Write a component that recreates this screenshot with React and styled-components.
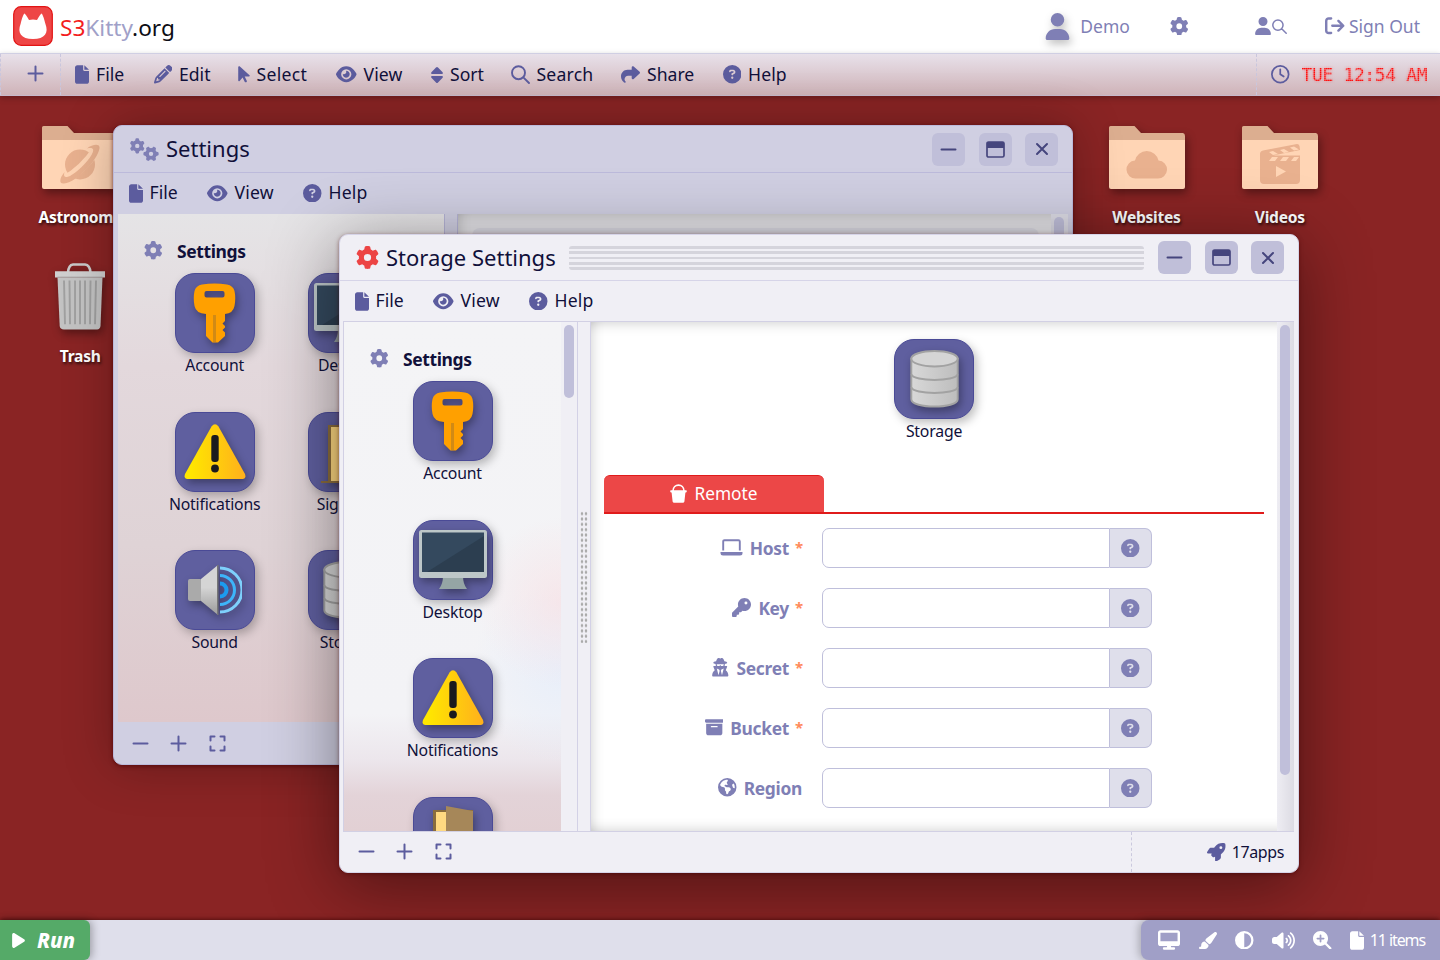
import React from "react";
import styled, { createGlobalStyle, css } from "styled-components";
import {
  FaFile, FaPencil, FaArrowPointer, FaEye, FaShare, FaCircleQuestion, FaGear, FaGears,
  FaUser, FaArrowRightFromBracket, FaRegClock, FaKey, FaUserSecret,
  FaBoxArchive, FaEarthAmericas, FaRocket, FaDesktop, FaPaintbrush,
  FaCircleHalfStroke, FaVolumeHigh, FaMagnifyingGlassPlus, FaPlay,
} from "react-icons/fa6";

const ink = "#10103a";
const indigo = "#5c5c9e";
const soft = "#7f7fb5";

const Global = createGlobalStyle`
  * { box-sizing: border-box; }
  body { margin: 0; overflow: hidden; font-family: "Noto Sans", "Open Sans", sans-serif; color: ${ink}; }
  svg { display: block; flex: none; }
`;

const Screen = styled.div`
  width: 1440px;
  height: 960px;
  display: flex;
  flex-direction: column;
  background: #8a2424;
  overflow: hidden;
`;

/* Top header */
const Header = styled.header`
  height: 53px;
  flex: none;
  background: #fff;
  display: flex;
  align-items: center;
  justify-content: space-between;
  padding: 0 20px 1px 13px;
`;
const Brand = styled.div`
  display: flex;
  align-items: center;
  gap: 7px;
  font-size: 22.6px;
  color: #0c0c14;
  white-space: nowrap;
`;
const BrandName = styled.span`padding-top: 2px;`;
const Red = styled.span`color: #f31d1d;`;
const Lilac = styled.span`color: #a0a0c8;`;
const Account = styled.nav`
  display: flex;
  align-items: center;
  color: ${soft};
  font-size: 17.5px;
`;
const AccountItem = styled.div`
  display: flex;
  align-items: center;
  gap: ${(p) => p.$gap || 0}px;
  margin-left: ${(p) => p.$before || 0}px;
  white-space: nowrap;
`;
const Avatar = styled.span`filter: drop-shadow(2px 4px 4px rgba(0, 0, 0, 0.25));`;

/* Menus */
const MenuBar = styled.div`
  height: 43px;
  flex: none;
  display: flex;
  border-top: 1px solid #d0cfe3;
  border-bottom: 1px solid #c7b9cb;
  background: linear-gradient(#e8e1ea, #cfb3b8);
  box-shadow: 0 2px 6px rgba(0, 0, 0, 0.25);
  position: relative;
`;
const PlusCell = styled.div`
  width: 61px;
  padding: 0 0 2px 9px;
  display: grid;
  place-items: center;
  border: dashed #c9c6dd;
  border-width: 0 1px;
  color: ${indigo};
`;
const ClockCell = styled.div`
  margin-left: auto;
  width: 184px;
  display: flex;
  align-items: center;
  padding-left: 14px;
  border-left: 1px dashed #c9c6dd;
  color: ${indigo};
`;
const Led = styled.span`
  margin-left: 12px;
  font-family: "DejaVu Sans Mono", monospace;
  font-size: 18px;
  letter-spacing: -0.36px;
  color: #ff1010;
  text-shadow: 0 0 3px rgba(255, 60, 60, 0.7);
  white-space: nowrap;
  mask-image: repeating-linear-gradient(90deg, #000 0 1px, rgba(0, 0, 0, 0.75) 1px 2px),
    repeating-linear-gradient(#000 0 1px, rgba(0, 0, 0, 0.7) 1px 2px);
  mask-composite: intersect;
`;
const MenuItem = styled.div`
  display: flex;
  align-items: center;
  gap: 7px;
  margin-right: 27.5px;
  color: ${indigo};
`;
const MenuText = styled.span`
  width: ${(p) => p.$w}px;
  padding-bottom: 2px;
  color: ${ink};
  font-size: 17.6px;
  letter-spacing: ${(p) => p.$track || 0}px;
  white-space: nowrap;
`;
const MainMenu = styled.div`
  display: flex;
  padding-left: 14px;
`;

/* Desktop */
const Desktop = styled.main`
  flex: 1;
  position: relative;
  display: grid;
  grid-template-columns: repeat(10, 133.3px);
  grid-auto-rows: 139px;
  align-content: start;
  padding: 26px 0 0 13.5px;
`;
const Shortcut = styled.div`
  grid-column: ${(p) => p.$col};
  grid-row: ${(p) => p.$row};
  display: flex;
  flex-direction: column;
  align-items: center;
  color: #fff;
  font-size: 15.6px;
  font-weight: 700;
  letter-spacing: -0.25px;
  text-shadow: 1px 2px 3px rgba(0, 0, 0, 0.7);
  white-space: nowrap;
`;
const Picture = styled.div`
  height: 84px;
  padding-top: ${(p) => p.$top || 0}px;
  filter: drop-shadow(2px 4px 5px rgba(0, 0, 0, 0.4));
`;

/* Windows */
const Window = styled.section`
  position: absolute;
  left: ${(p) => p.$x}px;
  top: ${(p) => p.$y}px;
  width: 960px;
  height: ${(p) => p.$h}px;
  display: flex;
  flex-direction: column;
  border: 1px solid ${(p) => (p.$dim ? "#bcbadb" : "#d6d4e8")};
  border-radius: 9px;
  background: ${(p) => (p.$dim ? "#d0cfe2" : "#f0eff5")};
  box-shadow: ${(p) => (p.$dim ? "0 0 50px rgba(0,0,0,.28), 0 1px 4px rgba(80,0,0,.7)" : "0 12px 70px rgba(0,0,0,.45), 0 1px 4px rgba(80,0,0,.5)")};
  overflow: hidden;
`;
const TitleBar = styled.div`
  height: ${(p) => (p.$dim ? 47 : 46)}px;
  flex: none;
  display: flex;
  align-items: center;
  padding: 0 14px 0 16px;
  border-bottom: 1px solid ${(p) => (p.$dim ? "#bcbadb" : "#d6d4e8")};
`;
const Title = styled.h1`
  margin: 0 0 0 7px;
  padding-bottom: 2px;
  width: ${(p) => p.$w}px;
  font-size: 22px;
  font-weight: 400;
  white-space: nowrap;
`;
const Grip = styled.div`
  flex: 1;
  height: 24px;
  margin: 0 14px;
  border-radius: 3px;
  background: ${(p) => (p.$dim ? "none" : "repeating-linear-gradient(#d5d4dc 0 2.7px, transparent 2.7px 5.34px)")};
`;
const WinButtons = styled.div`
  display: flex;
  gap: 13.5px;
`;
const WinButton = styled.button`
  width: 33px;
  height: 33px;
  padding: 0;
  border: 0;
  border-radius: 6px;
  display: grid;
  place-items: center;
  color: #45457d;
  background: #c0bfd9;
`;
const WinMenu = styled.div`
  height: 40px;
  flex: none;
  display: flex;
  padding-left: 14.5px;
`;
const Body = styled.div`
  flex: 1;
  min-height: 0;
  display: flex;
  margin: 0 4px 0 3px;
  border: 1px solid ${(p) => (p.$dim ? "transparent" : "#d2d0e4")};
  border-right-width: 0;
`;
const Sidebar = styled.aside`
  width: ${(p) => p.$w}px;
  flex: none;
  padding-top: 21px;
  overflow: hidden;
  ${(p) =>
    p.$dim
      ? css`background: linear-gradient(#e5e4e6, #e3d8dc 30%, #dfd3d6 65%, #dec8cc);`
      : css`background:
          radial-gradient(circle at 100% 55%, rgba(248, 222, 226, 0.6), transparent 24%),
          radial-gradient(circle at 100% 69%, rgba(226, 236, 252, 0.6), transparent 22%),
          linear-gradient(#f4f4f6, #f3f3f6 77%, #ece6ec 86%, #e3d3d8 93%, #e2d0d4);`}
`;
const Track = styled.div`
  width: ${(p) => p.$w}px;
  flex: none;
  padding: 3px 3px 0;
  background: ${(p) => p.$bg};
`;
const Thumb = styled.div`
  width: 10px;
  height: ${(p) => p.$h}px;
  border-radius: 5px;
  background: #c0bfda;
`;
const Splitter = styled.div`
  width: 14px;
  flex: none;
  display: grid;
  place-items: center;
  border: solid ${(p) => (p.$dim ? "#b6b4d6" : "#d3d1e6")};
  border-width: 0 1px;
`;
const Dots = styled.div`
  width: 8px;
  height: 132px;
  background: radial-gradient(circle, #aaa 1.3px, transparent 1.6px);
  background-size: 4px 5.33px;
`;
const Content = styled.div`
  flex: 1;
  min-width: 0;
  overflow: hidden;
  background: ${(p) => (p.$dim ? "#e6e5e9" : "#fff")};
  box-shadow: inset 14px 0 14px -14px rgba(0, 0, 0, 0.2), inset 0 14px 14px -14px rgba(0, 0, 0, 0.22),
    inset 0 -14px 14px -14px rgba(0, 0, 0, 0.2);
`;
const Placeholder = styled.div`
  height: 60px;
  margin: 14px 12px 0 14px;
  border-radius: 8px;
  background: #dad9e2;
`;
const SideHeading = styled.h2`
  height: 31px;
  margin: 0;
  padding-left: 26px;
  display: flex;
  gap: 14.5px;
  align-items: center;
  font-size: 17.5px;
  letter-spacing: -0.4px;
  color: ${ink};
`;
const AppGrid = styled.div`
  display: grid;
  grid-template-columns: repeat(${(p) => p.$cols}, ${(p) => (p.$cols > 1 ? "133.3px" : "1fr")});
  grid-auto-rows: 138.7px;
  padding-top: 7px;
  padding-left: ${(p) => (p.$cols > 1 ? 30 : 0)}px;
`;
const AppCell = styled.div`
  display: flex;
  flex-direction: column;
  align-items: center;
  font-size: 15.8px;
  letter-spacing: -0.2px;
  line-height: 25px;
  white-space: nowrap;
`;
const Tile = styled.div`
  width: 80px;
  height: 80px;
  display: grid;
  place-items: center;
  border-radius: 20px;
  border: 1px solid #4a4a96;
  background: #5f5f9f;
  box-shadow: 3px 4px 10px rgba(0, 0, 0, 0.25);
  svg { filter: drop-shadow(2px 4px 4px rgba(0, 0, 0, 0.35)); }
`;
const Footer = styled.footer`
  height: ${(p) => (p.$dim ? 41 : 40)}px;
  flex: none;
  display: flex;
  align-items: center;
  padding-left: 17.5px;
  color: ${indigo};
`;
const FootIcons = styled.div`
  display: flex;
  align-items: center;
  gap: 21.700px;
  padding-bottom: 1px;
`;
const Status = styled.div`
  width: 167px;
  height: 100%;
  margin-left: auto;
  padding-right: 14px;
  display: flex;
  align-items: center;
  justify-content: flex-end;
  gap: 6px;
  border-left: 1px dashed #cbc9de;
  font-size: 16px;
  letter-spacing: -0.4px;
`;
const StatusText = styled.span`color: ${ink};`;

/* Form */
const Hero = styled.div`
  padding-top: 17px;
  height: 153px;
`;
const Tabs = styled.div`
  margin: 0 13px;
  display: flex;
  border-bottom: 2px solid #e01b1b;
`;
const Tab = styled.div`
  width: 220px;
  height: 37px;
  padding-bottom: 1px;
  display: flex;
  align-items: center;
  justify-content: center;
  gap: 7px;
  border-radius: 6px 6px 0 0;
  border-top: 1px solid #e01b1b;
  background: #ec4747;
  color: #fff;
  font-size: 17.3px;
`;
const Form = styled.form`
  padding-top: 14px;
  display: grid;
  gap: 20px;
`;
const Field = styled.div`
  height: 40px;
  display: flex;
`;
const Label = styled.label`
  width: 211px;
  padding-bottom: 1px;
  display: flex;
  align-items: center;
  justify-content: flex-end;
  gap: 7px;
  color: ${soft};
  font-size: 17.4px;
  font-weight: 700;
  letter-spacing: -0.3px;
`;
const Star = styled.span`
  width: 7px;
  padding-bottom: 1px;
  margin-left: -1px;
  color: #ff8a5c;
  font-size: 15px;
`;
const Input = styled.input`
  width: 288px;
  margin-left: 20px;
  border: 1px solid #bfbfdb;
  border-radius: 7px 0 0 7px;
  background: #fff;
`;
const Hint = styled.div`
  width: 42px;
  display: grid;
  place-items: center;
  border: 1px solid #bfbfdb;
  border-left: 0;
  border-radius: 0 7px 7px 0;
  background: #dfdfeb;
  color: ${soft};
`;

/* Taskbar */
const Taskbar = styled.div`
  height: 40px;
  flex: none;
  display: flex;
  justify-content: space-between;
  position: relative;
  background: #dfdfeb;
  box-shadow: 0 -1px 4px rgba(50, 0, 0, 0.6);
`;
const Run = styled.div`
  width: 90px;
  padding-left: 10px;
  display: flex;
  align-items: center;
  gap: 10px;
  border-radius: 0 6px 6px 0;
  background: #55aa68;
  box-shadow: 2px 0 8px rgba(0, 0, 0, 0.3);
  color: #fff;
  font-size: 20.5px;
  font-weight: 800;
  font-style: italic;
`;
const Tray = styled.div`
  width: 299px;
  padding: 0 15px 0 17px;
  display: flex;
  align-items: center;
  justify-content: space-between;
  border-radius: 8px 0 0 8px;
  background: #a09fc7;
  box-shadow: -2px 0 8px rgba(0, 0, 0, 0.25);
  color: #fff;
`;
const Items = styled.div`
  display: flex;
  align-items: center;
  gap: 6px;
  font-size: 16px;
  letter-spacing: -1.1px;
  white-space: nowrap;
`;

/* Drawn icons */
const FileIcon = styled(FaFile).attrs({ size: 19 })`width: 14px;`;
const PointerIcon = styled(FaArrowPointer).attrs({ size: 18.5 })`width: 12px;`;
const Stroke = ({ w, h = w, box, d, sw = 2 }) => (
  <svg width={w} height={h} viewBox={box} fill="none" stroke="currentColor" strokeWidth={sw} strokeLinecap="round" strokeLinejoin="round"><path d={d} /></svg>
);
const Plus = () => <Stroke w={17} box="0 0 17 17" d="M8.5 1.5v14M1.5 8.5h14" />;
const Minus = () => <Stroke w={17} box="0 0 17 17" d="M1.5 8.5h14" />;
const Expand = () => <Stroke w={17} box="0 0 17 17" d="M1.5 5.5v-4h4M11.5 1.5h4v4M15.5 11.5v4h-4M5.5 15.5h-4v-4" />;
const Cross = () => <Stroke w={14} box="0 0 14 14" d="M2 2l10 10M12 2L2 12" />;
const SearchIcon = ({ size = 19 }) => <Stroke w={size} box="0 0 19 19" d="M14 7.7a6.500 6.500 0 1 1-13 0a6.500 6.500 0 1 1 13 0M12.300 12.300l5.700 5.700" sw={1.9} />;
const SortIcon = () => (
  <svg width="12" height="18" viewBox="0 0 12 18" fill="currentColor">
    <path d="M5 1.4Q6 .4 7 1.4l4.6 4.8Q12.400 7.900 11 8H1Q-.4 7.900.4 6.200zM5 16.600Q6 17.600 7 16.600l4.600-4.800Q12.400 10.100 11 10H1Q-.4 10.100.4 11.800z" />
  </svg>
);
const Restore = () => (
  <svg width="19" height="17" viewBox="0 0 19 17"><rect x="1" y="1" width="17" height="15" rx="1.600" fill="none" stroke="currentColor" strokeWidth="1.700" /><path d="M1 1h17v6H1z" fill="currentColor" /></svg>
);
const LaptopIcon = () => (
  <svg width="23" height="17" viewBox="0 0 23 17"><path d="M3.200 11.500V2.500Q3.200 1.200 4.500 1.200h14Q19.800 1.200 19.800 2.500v9" fill="none" stroke="currentColor" strokeWidth="1.900" /><path d="M.5 13h22v1q0 2.500-2.500 2.500H3Q.5 16.500.5 14z" fill="currentColor" /></svg>
);
const BucketIcon = () => (
  <svg width="17" height="19" viewBox="0 0 17 19" fill="currentColor"><path d="M3 7C3-.9 14-.9 14 7" fill="none" stroke="currentColor" strokeWidth="1.600" /><path d="M1 6.300h15q1 0 .8 1.200-.2.900-1 .900h-.4l-1 9q-.2 1.400-1.600 1.400H4.200q-1.400 0-1.600-1.400l-1-9h-.4q-.8 0-1-.9Q0 6.300 1 6.300z" /></svg>
);
const Cat = () => (
  <svg width="40" height="40" viewBox="0 0 40 40"><rect x=".7" y=".7" width="38.600" height="38.600" rx="7.500" fill="#ee4646" stroke="#e21414" strokeWidth="1.200" /><path d="M11.300 7.500Q12.500 7.800 16 14Q20 12.900 24 14Q27.500 7.800 28.700 7.500C30 9 31.500 14 32.300 17.500C36 27 32 33 20 33S4 27 7.700 17.500C8.500 14 10 9 11.300 7.500z" fill="#fff" /></svg>
);
const Folder = ({ children }) => (
  <svg width="76" height="63" viewBox="0 0 76 63">
    <path d="M1.500 0H25.500L32 7H74Q76 7.500 76 10V16H0V1.500Q0 0 1.500 0z" fill="#dcae90" />
    <path d="M0 14H76V61Q76 63 74 63H2Q0 63 0 61z" fill="#ffd5b5" />
    {children}
  </svg>
);
const tone = "#e9b18f";
const Planet = () => (
  <Folder>
    <circle cx="38" cy="38.500" r="15" fill={tone} />
    <path d="M22 54Q40 45 55 23" fill="none" stroke="#ffd5b5" strokeWidth="9" />
    <path d="M22.500 46C17 53 17 58 22 57.500C29 57 38 50 46 41.500C53 34 58 25 57.500 21C57 17.500 50 18.500 45 22.500C51 21 53 23 49.500 29C45 37 35 46 28 50C23 52.500 21 50.500 22.500 46z" fill={tone} />
  </Folder>
);
const CloudFolder = () => (
  <Folder><path d="M27 52.500a9 9 0 0 1-1-18 12 12 0 0 1 23.500 0 9 9 0 0 1-1 18z" fill={tone} /></Folder>
);
const Clapper = () => (
  <Folder>
    <path d="M18 28Q18 25 21 24.500L55 18Q57 18 57.500 20L58 24L31 29.500H58V54Q58 58 54 58H22Q18 58 18 54z" fill={tone} />
    <path d="M27 26l4-1 5 3-5 1zM38 24l4-1 5 3-5 1zM48 21.500l4-1 5 3-5 1zM30 31h6l-3 4h-6zM41 31h6l-3 4h-6zM52 31h5l-3 4h-5zM34 40v11l10-5.500z" fill="#ffd5b5" />
  </Folder>
);
const TrashIcon = () => (
  <svg width="50" height="67" viewBox="0 0 50 69" preserveAspectRatio="none">
    <path d="M13 10Q13.500 2 18 1.500H30Q35 2 35.500 10" fill="none" stroke="#c9c9c9" strokeWidth="2.600" />
    <path d="M0 8.500H50V15H0z" fill="#cfcfcf" />
    <path d="M2.500 15H47.500L45.500 65Q45 68.500 42 68.500H9Q5 68.500 4.700 65z" fill="#c3c3c3" />
    <path d="M2.500 14.500H47.500" stroke="#aaa" />
    <path d="M9 18l1 45M14.500 18l.5 45M20 18v45M25 18v45M30 18v45M35.500 18l-.5 45M41 18l-1 45" stroke="#a0a0a0" strokeWidth="1.900" />
  </svg>
);
const art = {
  Account: () => (
    <svg width="43" height="60" viewBox="0 0 43 60"><path fillRule="evenodd" d="M9 1.500Q21.500-.5 34 1.500Q40 2.500 41.500 8Q43 15 41.500 23Q40 30.500 32 31V38L29.500 40.500L32 43V44.500L29.500 47L32 49.500V53L25 59.500H19.500L13 53V31Q3 30.500 1.500 23Q0 15 1.500 8Q3 2.500 9 1.500zM13.500 8Q11.500 8 11.500 10V12.500Q11.500 14.500 13.500 14.500H29.500Q31.500 14.500 31.500 12.500V10Q31.500 8 29.500 8z" fill="#ffa000" /><path d="M20 32h3v27h-3z" fill="#d18a15" /></svg>
  ),
  Desktop: () => (
    <svg width="68" height="60" viewBox="0 0 68 60"><path d="M24 46H44Q44 54 48 59H20Q24 54 24 46z" fill="#95a5a5" /><rect x="0" y="0" width="68" height="48" rx="2.500" fill="#bdc7c8" /><path d="M3 2.500H65V42H3z" fill="#34495e" /><path d="M65 6V42H8z" fill="#2c3e50" /></svg>
  ),
  Notifications: () => (
    <svg width="62" height="56" viewBox="0 0 62 56"><defs><linearGradient id="warn" x1="0" y1="1" x2="1" y2="1"><stop offset=".1" stopColor="#ffe600" /><stop offset="1" stopColor="#ffb01c" /></linearGradient></defs><path d="M27.500 2.500Q31-2 34.500 2.500L61 50Q62.500 54.500 58.500 55H3.500Q-.5 54.500 1 50z" fill="url(#warn)" /><rect x="27.300" y="11" width="7.400" height="27" rx="3" fill="#1a1a1e" /><circle cx="31" cy="44.500" r="3.900" fill="#1a1a1e" /></svg>
  ),
  "Sign Out": () => (
    <svg width="54" height="62" viewBox="0 0 54 62"><path d="M7 4h40v58H7z" fill="#8a6c3c" /><path d="M10 6h36v54H10z" fill="#ffd981" /><path d="M20 0L47 5V61L20 62z" fill="#a68759" /><path d="M0 60h54v2H0z" fill="#8a6c3c" /></svg>
  ),
  Sound: () => (
    <svg width="54" height="50" viewBox="0 0 54 50"><defs><linearGradient id="cone" x1="0" y1="0" x2="0" y2="1"><stop offset=".45" stopColor="#d5d5d5" /><stop offset=".9" stopColor="#a5a5a5" /></linearGradient></defs><rect y="14" width="14" height="22" rx="2" fill="#aaa" /><path d="M13 14L30 0V50L13 36z" fill="url(#cone)" /><path d="M29 0h1.500v50H29z" fill="#777" /><g fill="none" strokeWidth="3"><path d="M32 18.500a6.500 6.500 0 0 1 0 13" stroke="#1b9cf0" strokeWidth="4" /><path d="M32 10.500a14.500 14.500 0 0 1 0 29" stroke="#3db5fa" /><path d="M32 3a22 22 0 0 1 0 44" stroke="#7ed0fc" /></g></svg>
  ),
  Storage: () => (
    <svg width="49" height="58" viewBox="0 0 50 60"><defs><linearGradient id="drum"><stop stopColor="#d8d8d8" /><stop offset="1" stopColor="#bdbdbd" /></linearGradient></defs><path d="M1 9V51C1 61 49 61 49 51V9z" fill="url(#drum)" stroke="#a2a2a2" strokeWidth="2" /><ellipse cx="25" cy="9" rx="24" ry="8" fill="#d5d5d5" stroke="#a2a2a2" strokeWidth="2" /><path d="M1 25C3 33 47 33 49 25M1 38.500C3 46.500 47 46.500 49 38.500" fill="none" stroke="#a2a2a2" strokeWidth="2" /></svg>
  ),
};

const AppIcon = ({ name, bare }) => {
  const Art = art[name];
  return <AppCell><Tile><Art /></Tile>{bare ? null : name}</AppCell>;
};
const Entry = ({ icon, text, w, track }) => (
  <MenuItem>{icon}<MenuText $w={w} $track={track}>{text}</MenuText></MenuItem>
);
const WindowMenu = () => (
  <WinMenu>
    <Entry icon={<FileIcon />} text="File" w={30} />
    <Entry icon={<FaEye size={20.500} />} text="View" w={41} track={0.2} />
    <Entry icon={<FaCircleQuestion size={18.500} />} text="Help" w={40} track={0.2} />
  </WinMenu>
);
const WindowTitle = ({ icon, text, w, dim }) => (
  <TitleBar $dim={dim}>
    {icon}
    <Title $w={w}>{text}</Title>
    <Grip $dim={dim} />
    <WinButtons>
      <WinButton><Minus /></WinButton>
      <WinButton><Restore /></WinButton>
      <WinButton><Cross /></WinButton>
    </WinButtons>
  </TitleBar>
);
const fields = [
  { icon: <LaptopIcon />, text: "Host", required: true },
  { icon: <FaKey size={19} />, text: "Key", required: true },
  { icon: <FaUserSecret size={18.500} />, text: "Secret", required: true },
  { icon: <FaBoxArchive size={18.500} />, text: "Bucket", required: true },
  { icon: <FaEarthAmericas size={18.500} />, text: "Region" },
];

export default function App() {
  return (
    <Screen>
      <Global />
      <Header>
        <Brand><Cat /><BrandName><Red>S3</Red><Lilac>Kitty</Lilac>.org</BrandName></Brand>
        <Account>
          <AccountItem $gap={9}><Avatar><FaUser size={27} /></Avatar>Demo</AccountItem>
          <AccountItem $before={40}><FaGear size={18.500} /></AccountItem>
          <AccountItem $before={66}><FaUser size={18} /><SearchIcon size={15} /></AccountItem>
          <AccountItem $before={38} $gap={4}><FaArrowRightFromBracket size={19.500} />Sign Out</AccountItem>
        </Account>
      </Header>
      <MenuBar>
        <PlusCell><Plus /></PlusCell>
        <MainMenu>
          <Entry icon={<FileIcon />} text="File" w={30} />
          <Entry icon={<FaPencil size={18.500} />} text="Edit" w={31} />
          <Entry icon={<PointerIcon />} text="Select" w={52} track={0.3} />
          <Entry icon={<FaEye size={20.500} />} text="View" w={40} track={0.1} />
          <Entry icon={<SortIcon />} text="Sort" w={33} />
          <Entry icon={<SearchIcon />} text="Search" w={57} track={0.2} />
          <Entry icon={<FaShare size={19} />} text="Share" w={48} />
          <Entry icon={<FaCircleQuestion size={18.500} />} text="Help" w={40} track={0.1} />
        </MainMenu>
        <ClockCell><FaRegClock size={18.500} /><Led>TUE 12:54 AM</Led></ClockCell>
      </MenuBar>
      <Desktop>
        <Shortcut $col={1} $row={1}><Picture $top={4}><Planet /></Picture>Astronomy</Shortcut>
        <Shortcut $col={9} $row={1}><Picture $top={4}><CloudFolder /></Picture>Websites</Shortcut>
        <Shortcut $col={10} $row={1}><Picture $top={4}><Clapper /></Picture>Videos</Shortcut>
        <Shortcut $col={1} $row={2}><Picture $top={2}><TrashIcon /></Picture>Trash</Shortcut>

        <Window $x={113} $y={29} $h={640} $dim>
          <WindowTitle dim icon={<FaGears size={29} color={soft} />} text="Settings" w={83} />
          <WindowMenu />
          <Body $dim>
            <Sidebar $w={326} $dim>
              <SideHeading><FaGear size={18.500} color={soft} />Settings</SideHeading>
              <AppGrid $cols={2}>
                {["Account", "Desktop", "Notifications", "Sign Out", "Sound", "Storage"].map((n) => <AppIcon key={n} name={n} />)}
              </AppGrid>
            </Sidebar>
            <Splitter $dim />
            <Content $dim><Placeholder /></Content>
            <Track $w={17} $bg="#dcdbe5"><Thumb $h={300} /></Track>
          </Body>
          <Footer $dim><FootIcons><Minus /><Plus /><Expand /></FootIcons></Footer>
        </Window>

        <Window $x={339} $y={138} $h={639}>
          <WindowTitle icon={<FaGear size={23} color="#ec4444" />} text="Storage Settings" w={169} />
          <WindowMenu />
          <Body>
            <Sidebar $w={217}>
              <SideHeading><FaGear size={18.500} color={soft} />Settings</SideHeading>
              <AppGrid $cols={1}>
                {["Account", "Desktop", "Notifications"].map((n) => <AppIcon key={n} name={n} />)}
                <AppIcon name="Sign Out" bare />
              </AppGrid>
            </Sidebar>
            <Track $w={16} $bg="#f0eff5"><Thumb $h={73} /></Track>
            <Splitter><Dots /></Splitter>
            <Content>
              <Hero><AppIcon name="Storage" /></Hero>
              <Tabs><Tab><BucketIcon />Remote</Tab></Tabs>
              <Form>
                {fields.map((f) => (
                  <Field key={f.text}>
                    <Label>{f.icon}{f.text}{f.required && <Star>*</Star>}</Label>
                    <Input />
                    <Hint><FaCircleQuestion size={18.500} /></Hint>
                  </Field>
                ))}
              </Form>
            </Content>
            <Track $w={17} $bg="linear-gradient(90deg, #eeedf3, #dcdbe3)"><Thumb $h={450} /></Track>
          </Body>
          <Footer>
            <FootIcons><Minus /><Plus /><Expand /></FootIcons>
            <Status><FaRocket size={18.500} /><StatusText>17apps</StatusText></Status>
          </Footer>
        </Window>
      </Desktop>
      <Taskbar>
        <Run><FaPlay size={17} />Run</Run>
        <Tray>
          <FaDesktop size={22} /><FaPaintbrush size={19} /><FaCircleHalfStroke size={18.500} />
          <FaVolumeHigh size={23} /><FaMagnifyingGlassPlus size={18.500} />
          <Items><FileIcon />11 items</Items>
        </Tray>
      </Taskbar>
    </Screen>
  );
}
